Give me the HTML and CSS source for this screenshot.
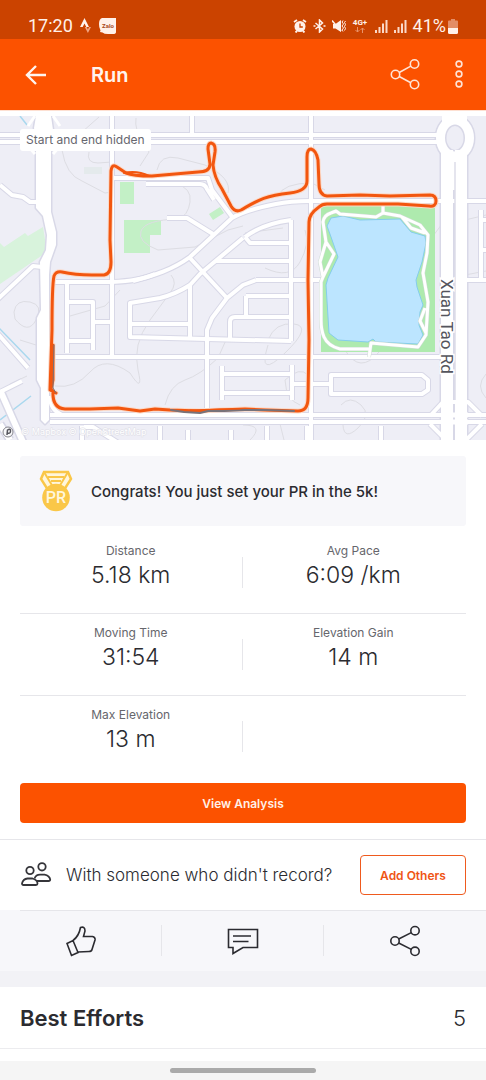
FILE: index.html
```html
<!DOCTYPE html>
<html lang="en">
<head>
<meta charset="utf-8">
<meta name="viewport" content="width=device-width, initial-scale=1">
<title>Run</title>
<link rel="stylesheet" href="styles.css">
</head>
<body>
<div class="screen">
  <div class="status">
    <div class="status-left">
      <span>17:20</span>
      <svg width="12" height="16" viewBox="0 0 12 16"><path d="M4.500 0L0 9h2.700l1.800-3.600L6.300 9H9z" fill="#fff1ea"/><path d="M4.800 9h1.900l1.200 2.500L9.100 9H11l-3.100 6z" fill="#f0a583"/></svg>
      <svg width="18" height="17" viewBox="0 0 18 17"><path d="M3 0H17V14Q17 16 14 16H9Q5 16 3.500 14.500L1 14Q2 13 1 11Q0 9 0 6Q0 1 3 0z" fill="#fff1ea"/><text x="9" y="10" class="zalo">Zalo</text></svg>
    </div>
    <div class="status-right">
      <svg width="14" height="14" viewBox="0 0 14 14"><circle cx="7" cy="7.500" r="5.500" fill="#fff1ea"/><path d="M1 3l3-2M13 3l-3-2M2.500 13.500L4 12M11.500 13.500L10 12" stroke="#fff1ea" stroke-width="1.800"/><path d="M7 4.500V8h2.800" stroke="#cb4300" stroke-width="1.300" fill="none"/></svg>
      <svg width="13" height="14" viewBox="0 0 13 14" fill="none" stroke="#fff1ea" stroke-width="1.500"><path d="M2.500 4l7 6L6.500 13V1l3 3-7 6M.5 7h2M10.500 7h2"/></svg>
      <svg width="14" height="14" viewBox="0 0 14 14"><path d="M1 5h2.500L9 1v12L3.500 9.500H1z" fill="#fff1ea"/><path d="M0 1.500L9 12" stroke="#fff1ea" stroke-width="1.500"/><path d="M11 1.500l-1 1.500 1.500 2-1.500 2 1.500 2-1.500 2 1 1.500M13.500 2l-1 1.500 1 2-1 2 1 2-1 2" stroke="#fff1ea" stroke-width="1" fill="none"/></svg>
      <svg width="17" height="16" viewBox="0 0 17 16"><text x="8" y="7" class="net">4G+</text><path d="M5.500 9v5m-2-2l2 2 2-2M10.500 15v-5m-2 2l2-2 2 2" stroke="#e9936b" fill="none"/></svg>
      <svg width="13" height="13" viewBox="0 0 13 13"><path d="M0 10h2v3H0zM3.500 7h2v6h-2zM7 3.500h2V13H7zM10.500 0h2v13h-2z" fill="#fbd9c9"/></svg>
      <svg width="13" height="13" viewBox="0 0 13 13"><path d="M0 10h2v3H0zM3.500 7h2v6h-2zM7 3.500h2V13H7zM10.500 0h2v13h-2z" fill="#fbd9c9"/></svg>
      <span class="battery">41%<svg width="10" height="15" viewBox="0 0 10 15"><path d="M3 0h4v1.500h2q1 0 1 1V9H0V2.500q0-1 1-1h2z" fill="#e38d66"/><path d="M0 9h10v4.500q0 1.500-1.500 1.500h-7Q0 15 0 13.500z" fill="#fff1ea"/></svg></span>
    </div>
  </div>

  <header class="bar">
    <button class="icon-btn" aria-label="Back"><svg width="22" height="20" viewBox="0 0 22 20" fill="none" stroke="#fff4ee" stroke-width="2.400"><path d="M21 10H2M11 1L2 10l9 9"/></svg></button>
    <h1 class="bar-title">Run</h1>
    <button class="icon-btn" aria-label="Share"><svg width="30" height="32" viewBox="0 0 30 32" fill="none" stroke="#ffe4d6" stroke-width="1.600"><circle cx="5.500" cy="15.500" r="4.200"/><circle cx="24.500" cy="5" r="4.200"/><circle cx="24.500" cy="25.500" r="4.200"/><path d="M9.200 13.500l11.600-6.400M9.200 17.500l11.600 6.200"/></svg></button>
    <button class="icon-btn" aria-label="More"><svg width="8" height="30" viewBox="0 0 8 30" fill="none" stroke="#ffe4d6" stroke-width="1.600"><circle cx="4" cy="4" r="2.900"/><circle cx="4" cy="14" r="2.900"/><circle cx="4" cy="24" r="2.900"/></svg></button>
  </header>

  <section class="map" aria-label="Route map">
    <svg class="map-art" viewBox="0 116 486 324" fill="none">
      <defs>
        <g id="minor">
          <path d="M0 135H440M0 142H440M112 116V357M192 116V133M311 116V440"/>
          <path d="M133 281C155 275 172 270 190 257L232 218Q245 210 276 204Q290 201 311 201H486"/>
          <path d="M113 178H208L212 190 233 218M146 184H200Q205 184 207 189L214 200M167 218H187L213 234"/>
          <path d="M53 282H112Q140 281 155 274M243 238L200 274 190 285Q176 294 160 298L130 303V337L207 339 291 341M190 285V337M130 324H190M190 258L227 298M215 261H291"/>
          <path d="M256 280L243 285 227 298 212 318 207 330V408M256 280H321"/>
          <path d="M67 282V353M68 302H93V350M93 322H112M68 341H93M52 357H441"/>
          <path d="M291 220V341M245 237Q262 224 291 220M245 237L250 243H291M246 296H291M246 296V317M230 338V322Q230 317 235 317H291"/>
          <path d="M222 366V400M223 374H291M223 393H291M292 365V400M292 384H329M331 375H422L428 380V390L422 394H331Z"/>
          <path d="M50 415H486M50 422H486M82 426V440M84 427H93L120 444M160 426V440M188 430V440M231 430V440M267 426V440M307 426V440M381 426V440"/>
          <path d="M430 416L443 402H468L482 416M430 424L450 444M482 424L462 444M481 210V280M481 220H486M481 250H486M466 280H486"/>
          <path d="M0 185L12 195 23 197 30 202H38M-2 299L33 266 42 267M-2 334L28 368M0 392L22 381M50 396Q50 410 62 415"/>
        </g>
        <g id="wide"><path d="M447 150V440M461 150V440"/></g>
        <path id="west" d="M36 116L34 128 36 138V208L43 216 47 235 46 250 40 262 41 310 37 318V380L41 388V420L45 424 49 420 49 275 50 262 56 245V232L51 212V146L53 130 51 116Z"/>
        <path id="trail" d="M331 213L336 211 340 214 376 217 383 213 400 216 420 225 428 235 427 253 423 273 428 302 426 335 418 347 371 343 369 357M369 349H340Q328 346 324 337Q321 330 321 320V282L323 277 320 262 326 242 323 222Q324 215 331 213M326 242L334 254 323 277M383 205V213M402 217L411 228 425 233M425 308L420 321 426 333"/>
        <path id="route" d="M56 393L50 390 52 330Q52 285 54 276Q56 271 62 272Q75 275 92 275H104Q111 274 111 262L110 240 111 171Q112 163 117 167L126 173Q133 176 152 176L175 174 198 172Q210 172 210 164L208 149Q208 143 211 143Q216 144 215 152L213 165Q214 177 222 189L231 206Q235 213 241 210C257 201 263 196 290 193Q307 191 307 181V157Q307 149 311 149Q316 150 318 160L319 184Q319 195 327 196L360 195 390 196 430 195Q436 195 436 201Q436 207 429 206L398 204H327Q322 204 319 207Q309 214 309 222L308 280 309 340 308 398Q308 411 298 411L265 410 245 409 220 410 200 411 170 410 155 409 140 411 118 408 90 409H65Q52 408 53 391L51 389 53 380 53 345"/>
      </defs>
      <rect y="116" width="486" height="324" fill="#eeeef6"/>
      <path d="M0 243L4 247 25 233 28 236 43 227 47 252 0 284Z" fill="#d8f3dc"/>
      <path d="M120 182H134V204H120ZM124 220H161V235H150V253H124ZM209 214L220 207 224 213 213 220Z" fill="#c3f0c6"/>
      <path d="M84 167H102V174H84Z" fill="#e4eaec"/>
      <path d="M62 150Q66 175 82 181L105 193 112 192M99 117L82 132M89 152Q86 163 98 163L112 162M136 118Q134 130 144 143L149 152 140 166M157 170Q160 154 178 158L205 165Q232 178 228 193M150 184H176Q192 188 190 202T178 219Q145 220 141 231T158 250L195 247 228 230 243 226M278 196Q283 183 312 183L325 190M245 233L283 228M265 268Q290 280 300 262T305 230M171 275Q178 283 170 293L150 320Q132 345 138 370T130 373Q105 355 90 372T55 386M70 316L105 306 120 290M14 312Q16 299 30 302T36 320T15 319ZM20 340L36 345M27 376L10 384 0 396M165 405Q170 385 185 380T218 358L226 340M268 340Q275 322 294 324T285 353T268 345M285 380Q300 366 308 375M285 380Q286 400 300 405M341 405Q350 395 361 405T358 428T343 425M345 350Q360 375 379 352M430 240L445 220M465 220L486 215M465 275L486 271M486 374Q475 386 486 398M243 425Q265 425 250 440M280 424L284 440" stroke="#dddde3"/>
      <path d="M20 116L27 125M-1 328L30 360M31 396L0 420" stroke="#a9d8ee" stroke-width="1.500"/>
      <g stroke-linejoin="round">
        <use href="#minor" stroke="#d8d8e7" stroke-width="6"/>
        <path d="M0 390L23 442M0 424L10 440" stroke="#d8d8e7" stroke-width="9"/>
        <use href="#west" stroke="#d8d8e7" stroke-width="3"/>
        <use href="#wide" stroke="#d8d8e7" stroke-width="15"/>
        <ellipse cx="455" cy="138" rx="14.500" ry="18" stroke="#d8d8e7" stroke-width="12"/>
        <use href="#minor" stroke="#fff" stroke-width="4"/>
        <path d="M0 390L23 442M0 424L10 440" stroke="#fff" stroke-width="6"/>
        <use href="#west" fill="#fff"/>
        <path d="M53 116L60 126M35 116L28 126M53 154L60 146M35 154L28 146" stroke="#fff" stroke-width="3"/>
        <use href="#wide" stroke="#fff" stroke-width="12"/>
        <path d="M455 157V190" stroke="#fff" stroke-width="18"/>
        <path d="M455 162V400" stroke="#dcdce8" stroke-width="1.500"/>
        <path d="M447 114V124M462 114V124" stroke="#fff" stroke-width="10"/>
        <ellipse cx="455" cy="138" rx="14.500" ry="18" stroke="#fff" stroke-width="9"/>
        <path d="M441 415H468M441 422H468" stroke="#fff" stroke-width="5"/>
      </g>
      <rect x="321" y="206" width="114" height="146" fill="#aeeaae"/>
      <path d="M331 218L343 216 360 220 400 219 411 232 425 236 426 243 422 262 416 280 417 287 423 305 420 312 419 325 423 335 418 344 376 342 373 339 368 342 338 340 329 333 326 285 328 278 338 257 331 237 327 226Z" fill="#bce5ff" stroke="#85cdec"/>
      <g stroke-linejoin="round">
        <use href="#trail" stroke="#d0dcd6" stroke-width="4"/>
        <use href="#trail" stroke="#fff" stroke-width="3"/>
      </g>
      <g stroke-linejoin="round" stroke-linecap="round">
        <use href="#route" stroke="#fbd9c8" stroke-width="5"/>
        <use href="#route" stroke="#f2560f" stroke-width="3"/>
        <path d="M124 173Q137 170 149 176" stroke="#f2560f" stroke-width="2"/>
        <path d="M171 410L184 412 200 413 208 411 224 411 245 410 265 410 294 411" stroke="#77727a" stroke-width="2"/>
        <path d="M54 345L53 388 56 393" stroke="#77727a" stroke-width="1"/>
        <path d="M190 410L220 409 240 409" stroke="#f2560f" stroke-width="1"/>
      </g>
      <text class="road" transform="translate(441 279) rotate(90)">Xuan Tao Rd</text>
      <circle cx="8" cy="432" r="5" fill="#f8f8fa" stroke="#85858d"/><path d="M7 435l.5-5q3-2 3 1t-3 2" stroke="#55555d" stroke-width="1.500"/>
      <text class="credit" x="21" y="435">© Mapbox © OpenStreetMap</text>
    </svg>
    <span class="map-note">Start and end hidden</span>
  </section>

  <main>
    <section class="summary">
      <div class="congrats">
        <svg width="36" height="42" viewBox="0 0 36 42"><path d="M6 2H30L33 9 26 20 10 20 3 9Z" fill="#fff6dc" stroke="#fac748" stroke-width="2.500"/><path d="M6 2L15 17M30 2L21 17M10 7H26M13 11H23" stroke="#fac748" stroke-width="2"/><circle cx="18" cy="27.500" r="13.800" fill="#fac748"/><text class="pr" x="18" y="33">PR</text></svg>
        <p>Congrats! You just set your PR in the 5k!</p>
      </div>
      <div class="stats">
        <div class="stat-row">
          <div class="stat"><span class="label">Distance</span><span class="value">5.18 km</span></div><i class="rule"></i>
          <div class="stat"><span class="label">Avg Pace</span><span class="value">6:09 /km</span></div>
        </div>
        <div class="stat-row">
          <div class="stat"><span class="label">Moving Time</span><span class="value">31:54</span></div><i class="rule"></i>
          <div class="stat"><span class="label">Elevation Gain</span><span class="value">14 m</span></div>
        </div>
        <div class="stat-row">
          <div class="stat"><span class="label">Max Elevation</span><span class="value">13 m</span></div><i class="rule"></i>
        </div>
      </div>
      <button class="btn primary">View Analysis</button>
    </section>

    <section class="others">
      <svg width="32" height="26" viewBox="0 0 32 26" fill="none" stroke="#35353a" stroke-width="1.800"><circle cx="10" cy="8.500" r="3.700"/><circle cx="22" cy="4.800" r="3.700"/><path d="M7.500 16.500H12.500Q17.500 18 17.500 21.500 17.500 23 16 23H3.500Q2 23 2 21.500 3 17 7.500 16.500Z"/><path d="M14.500 16.500Q16 12.600 20 12.600H24.500Q29.500 13.500 30.200 17.500 30.200 19 28.500 19H17"/></svg>
      <p>With someone who didn't record?</p>
      <button class="btn outline">Add Others</button>
    </section>

    <div class="actions">
      <button aria-label="Give kudos"><svg width="30" height="32" viewBox="0 0 30 32" fill="none" stroke="#2b2b30" stroke-width="1.600"><path d="M1 18.500L7 15.500 12 27.500 5.500 30.500ZM7 15.500Q13 11 14.500 2.500 19 1 19 6L17.500 11.500H26.500Q29.500 12 29 15L26 24.500Q25.500 26.500 23 26.500L12 27"/></svg></button>
      <button aria-label="Comment"><svg width="32" height="28" viewBox="0 0 32 28" fill="none" stroke="#2b2b30" stroke-width="1.600"><path d="M1.500 2.500H30.500V20.500H16L6 26.500V20.500H1.500ZM6 9H24M6 14.500H21.500"/></svg></button>
      <button aria-label="Share"><svg width="32" height="32" viewBox="0 0 32 32" fill="none" stroke="#2b2b30" stroke-width="1.600"><circle cx="6" cy="16" r="4.200"/><circle cx="26" cy="5.700" r="4.200"/><circle cx="26" cy="26.300" r="4.200"/><path d="M9.700 14l12.600-6.400M9.700 18l12.600 6.400"/></svg></button>
    </div>

    <section class="efforts"><h2>Best Efforts</h2><span>5</span></section>
  </main>
  <div class="nav"><i class="handle"></i></div>
</div>
</body>
</html>
```

FILE: styles.css
```css
* { box-sizing: border-box; }
body { margin: 0; background: #fff; color: #2b2b30; font-family: Inter, "Liberation Sans", sans-serif; }
h1, h2, p { margin: 0; }
svg { display: block; flex: none; }
button { font: inherit; color: inherit; cursor: pointer; }
.screen { display: flex; flex-direction: column; min-height: 100vh; }

.status { display: flex; justify-content: space-between; align-items: center; height: 39px; padding: 13px 28px 0; background: #cb4300; color: #fff1ea; font: 18px/26px Roboto, sans-serif; }
.status-left { display: flex; align-items: center; gap: 7px; }
.status-right { display: flex; align-items: center; gap: 6px; }
.battery { display: flex; align-items: center; gap: 2px; }
.zalo { font: bold 6px Roboto, sans-serif; fill: #a94a1d; text-anchor: middle; }
.net { font: bold 8px Roboto, sans-serif; fill: #fff1ea; text-anchor: middle; }

.bar { display: flex; align-items: center; height: 71px; padding: 0 23px 0 25px; background: #fc5200; color: #fff4ee; }
.icon-btn { display: flex; padding: 0; border: 0; background: none; }
.bar-title { flex: 1; margin-left: 44px; font-size: 20px; line-height: 28px; font-weight: 600; }
.bar .icon-btn:last-child { margin-left: 35px; }

.map { position: relative; padding-top: 5px; border-top: 1px solid #fde0d2; }
.map-art { width: 100%; height: auto; }
.map-note { position: absolute; left: 20px; top: 18px; padding: 0 6px; border-radius: 3px; background: #fff; color: #66666e; font-size: 12px; line-height: 22px; }
.road { font: 17px Roboto, sans-serif; fill: #55555d; stroke: #fff; stroke-width: 3px; paint-order: stroke; }
.credit { font: 9px Inter, sans-serif; fill: #fff; stroke: #dedee6; stroke-width: 1px; paint-order: stroke; }

.summary { padding: 16px 20px; }
.congrats { display: flex; align-items: center; gap: 17px; height: 70px; padding: 0 18px; border-radius: 3px; background: #f7f7fa; font-size: 15px; font-weight: 500; white-space: nowrap; }
.pr { font: 500 16px Roboto, sans-serif; fill: #fff6dc; text-anchor: middle; }
.stats { margin: 6px 0 5px; }
.stat-row { display: grid; grid-template-columns: 1fr 1px 1fr; height: 82px; padding: 11px 2px 0 0; border-bottom: 1px solid #e6e6ea; }
.stat-row:last-child { border-bottom: 0; }
.stat { display: flex; flex-direction: column; align-items: center; }
.label { color: #66666c; font-size: 12px; line-height: 16px; }
.value { font-size: 23px; line-height: 32px; font-weight: 300; }
.rule { height: 31px; margin-top: 14px; background: #e6e6ea; }
.btn { height: 40px; border-radius: 4px; font-size: 12px; font-weight: 600; }
.primary { display: block; width: 100%; border: 0; background: #fc5200; color: #fff0e8; }
.outline { width: 106px; border: 1px solid #ef5a1e; background: #fff; color: #ef5515; }

.others { display: flex; align-items: center; height: 71px; padding: 0 20px; border-top: 1px solid #e6e6ea; }
.others p { flex: 1; margin-left: 14px; font-size: 17px; font-weight: 300; white-space: nowrap; }
.actions { display: grid; grid-template-columns: 1fr 1fr 1fr; height: 61px; align-items: center; background: linear-gradient(#e6e6ea, #e6e6ea) 20px 0 / 100% 1px no-repeat #f7f7fa; }
.actions button { display: flex; justify-content: center; align-items: center; height: 31px; padding: 0; border: 0; border-right: 1px solid #e6e6ea; background: none; }
.actions button:last-child { border-right: 0; }
.efforts { display: flex; justify-content: space-between; align-items: center; height: 78px; padding: 0 20px; border-top: 16px solid #f2f2f6; border-bottom: 1px solid #ececef; font-size: 22px; font-weight: 300; }
.efforts h2 { font-size: 22px; font-weight: 600; }
.nav { display: flex; justify-content: center; align-items: center; height: 19px; margin-top: auto; background: #f5f5f5; }
.handle { width: 30%; height: 5px; border-radius: 3px; background: #aaa; }
```
